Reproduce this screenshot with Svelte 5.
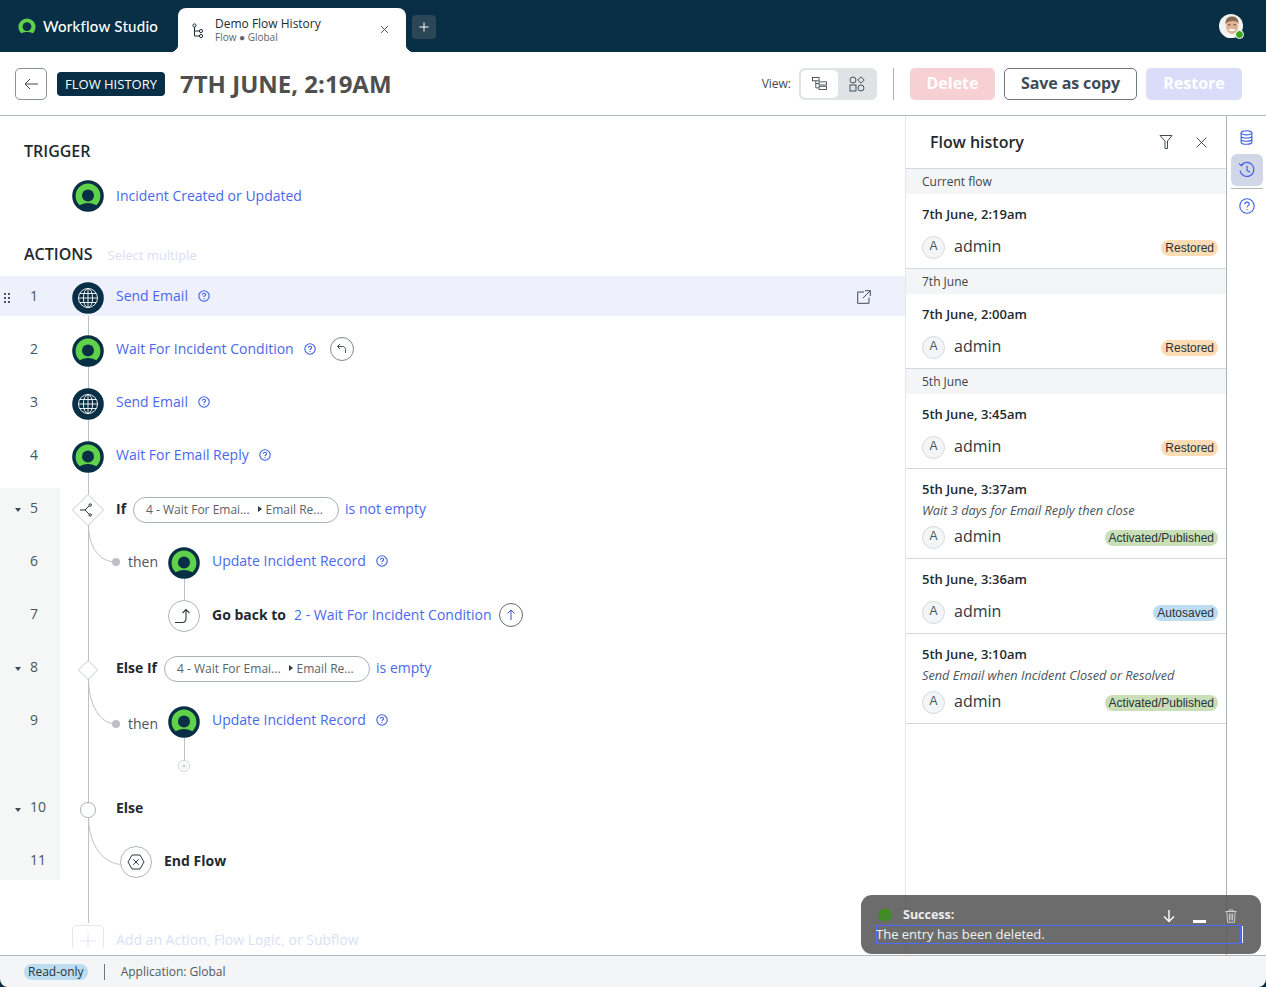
<script>
  const history = [
    { section: 'Current flow', date: '7th June, 2:19am', tag: 'Restored', kind: 'restored' },
    { section: '7th June', date: '7th June, 2:00am', tag: 'Restored', kind: 'restored' },
    { section: '5th June', date: '5th June, 3:45am', tag: 'Restored', kind: 'restored' },
    { date: '5th June, 3:37am', note: 'Wait 3 days for Email Reply then close', tag: 'Activated/Published', kind: 'active' },
    { date: '5th June, 3:36am', tag: 'Autosaved', kind: 'auto' },
    { date: '5th June, 3:10am', note: 'Send Email when Incident Closed or Resolved', tag: 'Activated/Published', kind: 'active' }
  ];
</script>

{#snippet logoNode()}
  <svg class="node" viewBox="-16 -16 32 32" aria-hidden="true">
    <circle r="15.8" fill="#082f45" />
    <path d="M-8.3 9.2A12.4 12.4 0 1 1 8.3 9.2Q0 5 -8.3 9.2Z" fill="#5fd24a" />
    <circle r="6" cy="-0.5" fill="#082f45" />
  </svg>
{/snippet}

{#snippet globeNode()}
  <svg class="node" viewBox="-16 -16 32 32" aria-hidden="true">
    <circle r="15.8" fill="#082f45" />
    <g fill="none" stroke="#fff" stroke-width="0.9">
      <circle r="9.5" />
      <ellipse rx="4.6" ry="9.5" />
      <path d="M0-9.5V9.5M-9.5 0H9.5M-8.4-4.5H8.4M-8.4 4.5H8.4" />
    </g>
  </svg>
{/snippet}

{#snippet help()}
  <svg class="help" viewBox="0 0 12 12" aria-hidden="true">
    <circle cx="6" cy="6" r="5.2" fill="none" stroke="#3f5fe8" stroke-width="1.1" />
    <path d="M4.4 4.8C4.4 3.8 5.1 3.3 6 3.3S7.6 3.9 7.6 4.7C7.6 5.7 6 5.8 6 7" fill="none" stroke="#3f5fe8" stroke-width="1.1" />
    <circle cx="6" cy="8.6" r=".7" fill="#3f5fe8" />
  </svg>
{/snippet}

{#snippet caret()}
  <span class="caret"></span>
{/snippet}

{#snippet pill()}
  <span class="pill">
    <span>4 - Wait For Emai...</span>
    <span class="tri"></span>
    <span>Email Re...</span>
  </span>
{/snippet}

<div class="app">
  <header class="topbar">
    <div class="brand">
      <svg class="brand-logo" viewBox="-9 -9 18 18" aria-hidden="true">
        <path d="M-6 6.2A8.6 8.6 0 1 1 6 6.2Q0 3.6 -6 6.2Z" fill="#5fd24a" />
        <circle r="4.4" cy="-0.4" fill="#082f45" />
      </svg>
      <span>Workflow Studio</span>
    </div>
    <div class="tab">
      <svg class="tab-icon" viewBox="0 0 14 16" aria-hidden="true">
        <g fill="none" stroke="#1d2b33" stroke-width="1">
          <circle cx="2.5" cy="2.5" r="1.6" />
          <circle cx="9" cy="8" r="1.6" />
          <circle cx="9" cy="13" r="1.6" />
          <path d="M2.5 4.1V13H7.4M2.5 8H7.4" />
        </g>
      </svg>
      <div class="tab-text">
        <div class="tab-title">Demo Flow History</div>
        <div class="tab-sub">Flow ● Global</div>
      </div>
      <svg class="tab-close" viewBox="0 0 10 10" aria-hidden="true">
        <path d="M1.2 1.2L8.8 8.8M8.8 1.2L1.2 8.8" stroke="#3a474f" stroke-width="1" />
      </svg>
    </div>
    <button class="plus" aria-label="New tab">
      <svg viewBox="0 0 10 10" width="10" height="10" aria-hidden="true">
        <path d="M5 .5V9.5M.5 5H9.5" stroke="#fff" stroke-width="1" />
      </svg>
    </button>
    <div class="me">
      <svg viewBox="0 0 24 24" width="24" height="24" aria-hidden="true">
        <defs><clipPath id="face"><circle cx="12" cy="12" r="12" /></clipPath></defs>
        <g clip-path="url(#face)">
          <rect width="24" height="24" fill="#f1f1ef" />
          <path d="M4 24C5 20 9 19 13 19S21 20 22 24Z" fill="#fafafa" />
          <ellipse cx="13" cy="12.5" rx="6" ry="7.5" fill="#e2b294" />
          <path d="M6.5 10.5C6 4 10 2.5 13.5 2.5S20 5 19.5 10.5C18.5 7.5 17 6.5 13 7S8 8 6.5 10.5Z" fill="#8a6a52" />
          <path d="M9.5 15.5C11 17.8 15 17.8 16.5 15.5L15 15H11Z" fill="#fff" />
          <path d="M9 10.8H11.5M14.5 10.8H17" stroke="#5b4636" stroke-width="1" />
        </g>
      </svg>
      <span class="me-badge"></span>
    </div>
  </header>

  <div class="toolbar">
    <button class="back" aria-label="Back">
      <svg viewBox="0 0 14 12" width="14" height="12" aria-hidden="true">
        <path d="M14 6H1M6 1L1 6L6 11" fill="none" stroke="#3a474f" stroke-width="1" />
      </svg>
    </button>
    <span class="flow-badge">FLOW HISTORY</span>
    <h1>7TH JUNE, 2:19AM</h1>
    <span class="view-label">View:</span>
    <div class="seg">
      <span class="seg-item on">
        <svg viewBox="0 0 16 14" width="15" height="13" aria-hidden="true">
          <g fill="none" stroke="#333f47" stroke-width=".9">
            <rect x=".5" y=".5" width="7" height="3.6" />
            <rect x="7.5" y="5.2" width="8" height="3.4" />
            <rect x="7.5" y="10" width="8" height="3.4" />
            <path d="M4 4V11.7H7.5M4 7H7.5" />
          </g>
        </svg>
      </span>
      <span class="seg-item">
        <svg viewBox="0 0 16 16" width="16" height="16" aria-hidden="true">
          <g fill="none" stroke="#333f47" stroke-width=".9">
            <circle cx="4" cy="4" r="3" />
            <path d="M12 .8L15.2 4L12 7.2L8.8 4Z" />
            <rect x="1" y="9" width="6" height="6" />
            <circle cx="12" cy="12" r="3" />
          </g>
        </svg>
      </span>
    </div>
    <span class="vr"></span>
    <button class="btn delete">Delete</button>
    <button class="btn copy">Save as copy</button>
    <button class="btn restore">Restore</button>
  </div>

  <div class="main">
    <section class="canvas">
      <svg class="wires" viewBox="0 116 905 839" width="905" height="839" aria-hidden="true">
        <g fill="none" stroke="#bcc3c8" stroke-width="1">
          <path d="M88.5 312V923" />
          <path d="M88.5 526C89 548 100 562 116 562" />
          <path d="M184.5 576V600" />
          <path d="M88.5 680C89 705 100 724 116 724" />
          <path d="M184.5 736V760" />
          <path d="M88.5 818C89 846 104 864 122 864.5" />
        </g>
        <circle cx="116" cy="562" r="4" fill="#bcc0c5" />
        <circle cx="116" cy="724" r="4" fill="#bcc0c5" />
      </svg>

      <h2 class="trigger-h">TRIGGER</h2>
      <div class="trigger">
        {@render logoNode()}
        <a class="link">Incident Created or Updated</a>
      </div>
      <div class="actions-h">
        <h2>ACTIONS</h2>
        <span>Select multiple</span>
      </div>

      <div class="row sel">
        <span class="grip"><i></i><i></i><i></i><i></i><i></i><i></i></span>
        <span class="num">1</span>
        {@render globeNode()}
        <a class="link">Send Email</a>
        {@render help()}
        <svg class="ext" viewBox="0 0 14 14" width="14" height="14" aria-hidden="true">
          <path d="M7 2H.7V13.3H12V7.5M8 .7H13.3V6M13.3 .7L6 8" fill="none" stroke="#3f4c54" stroke-width="1" />
        </svg>
      </div>
      <div class="row">
        <span class="num">2</span>
        {@render logoNode()}
        <a class="link">Wait For Incident Condition</a>
        {@render help()}
        <span class="round undo">
          <svg viewBox="0 0 12 12" width="12" height="12" aria-hidden="true">
            <path d="M1.5 3.5H6.5C8.5 3.5 9.5 5 9.5 6.5V10M1.5 3.5L4 1M1.5 3.5L4 6" fill="none" stroke="#3f4c54" />
          </svg>
        </span>
      </div>
      <div class="row">
        <span class="num">3</span>
        {@render globeNode()}
        <a class="link">Send Email</a>
        {@render help()}
      </div>
      <div class="row">
        <span class="num">4</span>
        {@render logoNode()}
        <a class="link">Wait For Email Reply</a>
        {@render help()}
      </div>

      <div class="group">
        <div class="row low">
          {@render caret()}
          <span class="num">5</span>
          <svg class="node n3" viewBox="-16 -16 32 32" aria-hidden="true">
            <path d="M0-15.5L15.5 0L0 15.5L-15.5 0Z" fill="#fff" stroke="#c3c9cd" />
            <g fill="none" stroke="#2a363e" stroke-width="1">
              <path d="M-8 0H-3L1-4M-3 0L1 4" />
              <circle cx="2.2" cy="-5" r="1.2" />
              <circle cx="2.2" cy="5" r="1.2" />
            </g>
          </svg>
          <strong class="kw">If</strong>
          {@render pill()}
          <a class="link">is not empty</a>
        </div>
        <div class="row">
          <span class="num">6</span>
          <span class="then-cell"><span class="then">then</span></span>
          {@render logoNode()}
          <a class="link">Update Incident Record</a>
          {@render help()}
        </div>
        <div class="row low">
          <span class="num">7</span>
          <span class="then-cell"></span>
          <span class="node n3 round-node">
            <svg viewBox="0 0 20 20" width="20" height="20" aria-hidden="true">
              <path d="M1 16.5H8C11 16.5 12 15 12 12.5V3.5M8.5 7L12 3.5L15.5 7" fill="none" stroke="#2f3b43" stroke-width="1.1" />
            </svg>
          </span>
          <strong class="go">Go back to</strong>
          <a class="link">2 - Wait For Incident Condition</a>
          <span class="round up">
            <svg viewBox="0 0 10 12" width="10" height="12" aria-hidden="true">
              <path d="M5 11V1M1.5 4.5L5 1L8.5 4.5" fill="none" stroke="#3550c8" />
            </svg>
          </span>
        </div>
        <div class="row low">
          {@render caret()}
          <span class="num">8</span>
          <svg class="node" viewBox="-16 -16 32 32" aria-hidden="true">
            <path d="M0-9.5L9.5 0L0 9.5L-9.5 0Z" fill="#fff" stroke="#c3c9cd" />
          </svg>
          <strong class="kw">Else If</strong>
          {@render pill()}
          <a class="link">is empty</a>
        </div>
        <div class="row">
          <span class="num">9</span>
          <span class="then-cell"><span class="then low">then</span></span>
          {@render logoNode()}
          <a class="link">Update Incident Record</a>
          {@render help()}
        </div>
        <div class="add-slot">
          <span class="add-dot">
            <svg viewBox="0 0 12 12" width="12" height="12" aria-hidden="true">
              <circle cx="6" cy="6" r="5.5" fill="#fff" stroke="#cfd4d8" />
              <path d="M6 3V9M3 6H9" stroke="#cfd4d8" />
            </svg>
          </span>
        </div>
        <div class="row">
          {@render caret()}
          <span class="num up-num">10</span>
          <svg class="node" viewBox="-16 -16 32 32" aria-hidden="true">
            <circle r="7.6" fill="#fff" stroke="#aeb6bc" />
          </svg>
          <strong class="kw">Else</strong>
        </div>
        <div class="row">
          <span class="num up-num">11</span>
          <span class="end-indent"></span>
          <span class="node n3 round-node">
            <svg viewBox="0 0 18 16" width="18" height="16" aria-hidden="true">
              <path d="M5 1H13L17 8L13 15H5L1 8Z" fill="none" stroke="#2f3b43" />
              <path d="M6.3 5.2L11.7 10.8M11.7 5.2L6.3 10.8" stroke="#2f3b43" />
            </svg>
          </span>
          <strong class="kw">End Flow</strong>
        </div>
      </div>

      <div class="add-row">
        <span class="add-box">
          <svg viewBox="0 0 14 14" width="14" height="14" aria-hidden="true">
            <path d="M7 0V14M0 7H14" stroke="#dfe3f6" />
          </svg>
        </span>
        <span class="add-text">Add an Action, Flow Logic, or Subflow</span>
      </div>
    </section>

    <aside class="panel">
      <div class="panel-head">
        <span class="panel-title">Flow history</span>
        <svg class="filter" viewBox="0 0 14 16" width="14" height="16" aria-hidden="true">
          <path d="M1 1.5H13L8.5 7V14.5H6V7Z" fill="none" stroke="#3f4c54" />
        </svg>
        <svg class="panel-x" viewBox="0 0 11 11" width="11" height="11" aria-hidden="true">
          <path d="M.7.7L10.3 10.3M10.3.7L.7 10.3" stroke="#3f4c54" />
        </svg>
      </div>
      {#each history as h}
        {#if h.section}<div class="section">{h.section}</div>{/if}
        <div class="entry">
          <div class="date">{h.date}</div>
          {#if h.note}<div class="note">{h.note}</div>{/if}
          <div class="user {h.note ? 'tight' : ''}">
            <span class="avatar">A</span>
            <span class="uname">admin</span>
            <span class="tag {h.kind}">{h.tag}</span>
          </div>
        </div>
      {/each}
    </aside>

    <nav class="rail">
      <span class="rail-btn first">
        <svg viewBox="0 0 14 16" width="13" height="15" aria-hidden="true">
          <g fill="none" stroke="#3f5fe8" stroke-width="1.2">
            <ellipse cx="7" cy="3" rx="5.8" ry="2.2" />
            <path d="M1.2 3V13C1.2 14.2 3.8 15.2 7 15.2S12.8 14.2 12.8 13V3M1.2 6.4C1.2 7.6 3.8 8.6 7 8.6S12.8 7.6 12.8 6.4M1.2 9.8C1.2 11 3.8 12 7 12S12.8 11 12.8 9.8" />
          </g>
        </svg>
      </span>
      <span class="rail-btn active">
        <svg viewBox="0 0 18 18" width="18" height="18" aria-hidden="true">
          <g fill="none" stroke="#3f5fe8" stroke-width="1.2">
            <path d="M3.5 4A7 7 0 1 1 2 9.5" />
            <path d="M1 2.6L3.5 4.6L5.8 2.4" />
            <path d="M9 4.8V9.4L12 11.2" />
          </g>
        </svg>
      </span>
      <span class="rail-sep"></span>
      <span class="rail-btn">
        <svg viewBox="0 0 16 16" width="16" height="16" aria-hidden="true">
          <circle cx="8" cy="8" r="7.2" fill="none" stroke="#3f5fe8" stroke-width="1.1" />
          <path d="M5.8 6.2C5.8 4.8 6.8 4.1 8 4.1S10.2 5 10.2 6.1C10.2 7.6 8 7.7 8 9.5" fill="none" stroke="#3f5fe8" stroke-width="1.1" />
          <circle cx="8" cy="11.6" r=".7" fill="#3f5fe8" />
        </svg>
      </span>
    </nav>
  </div>

  <footer class="status">
    <span class="readonly">Read-only</span>
    <span class="status-sep"></span>
    <span class="appname">Application: Global</span>
  </footer>

  <div class="toast">
    <div class="toast-top">
      <svg class="ok" viewBox="0 0 14 14" width="14" height="14" aria-hidden="true">
        <circle cx="7" cy="7" r="6.5" fill="#3e8e1e" />
        <path d="M4 7.2L6.2 9.3L10 5" fill="none" stroke="#5a7d4c" stroke-width="1.2" />
      </svg>
      <strong>Success:</strong>
      <svg class="t-down" viewBox="0 0 12 14" width="12" height="14" aria-hidden="true">
        <path d="M6 1V12.5M1 7.5L6 12.5L11 7.5" fill="none" stroke="#fff" stroke-width="1.4" />
      </svg>
      <span class="t-min"></span>
      <svg class="t-trash" viewBox="0 0 12 14" width="12" height="14" aria-hidden="true">
        <path d="M.5 2.5H11.5M4 2.5V1H8V2.5M1.8 2.5L2.6 13.3H9.4L10.2 2.5M4.4 4.5V11.5M6 4.5V11.5M7.6 4.5V11.5" fill="none" stroke="#d8d8d8" stroke-width=".9" />
      </svg>
    </div>
    <div class="toast-msg">The entry has been deleted.</div>
  </div>
</div>

<style>
  :global(body) {
    margin: 0;
    background: #082f45;
    font-family: "Open Sans", "Liberation Sans", sans-serif;
  }
  * { box-sizing: border-box; }
  h1, h2 { margin: 0; }
  button { font-family: inherit; cursor: pointer; }

  .app {
    position: relative;
    width: 1266px;
    height: 987px;
    display: flex;
    flex-direction: column;
    overflow: hidden;
    background: #082f45;
    color: #2e3a42;
  }

  /* top bar */
  .topbar {
    height: 52px;
    flex: none;
    display: flex;
    align-items: flex-end;
    background: #082f45;
    color: #fff;
  }
  .brand {
    width: 178px;
    height: 52px;
    display: flex;
    align-items: center;
    padding-left: 18px;
    gap: 7px;
    font-family: Lato, sans-serif;
    font-size: 15px;
    font-weight: 500;
    letter-spacing: .25px;
  }
  .brand-logo { width: 18px; height: 18px; flex: none; margin-top: 1px; }
  .tab {
    position: relative;
    width: 228px;
    height: 44px;
    display: flex;
    align-items: center;
    background: #fff;
    border-radius: 8px 8px 0 0;
    color: #1d2b33;
    padding: 0 17px 0 14px;
  }
  .tab::before, .tab::after {
    content: "";
    position: absolute;
    bottom: 0;
    width: 8px;
    height: 8px;
  }
  .tab::before { left: -8px; background: radial-gradient(circle at 0 0, transparent 8px, #fff 8.5px); }
  .tab::after { right: -8px; background: radial-gradient(circle at 100% 0, transparent 8px, #fff 8.5px); }
  .tab-icon { width: 14px; height: 16px; margin-top: 1px; flex: none; }
  .tab-text { margin: -2px 0 0 9px; flex: 1; }
  .tab-title { font-size: 12px; line-height: 16px; }
  .tab-sub { font-size: 10px; line-height: 12px; color: #5b666d; margin-top: -1px; }
  .tab-close { width: 9px; height: 9px; margin-top: -1px; flex: none; }
  .plus {
    width: 24px;
    height: 24px;
    margin: 0 0 13px 6px;
    padding: 0;
    border: 0;
    border-radius: 4px;
    background: #2a4657;
    display: flex;
    align-items: center;
    justify-content: center;
  }
  .me { position: relative; margin: 0 23px 14px auto; width: 24px; height: 24px; }
  .me svg { display: block; }
  .me-badge {
    position: absolute;
    right: -1px;
    bottom: -1px;
    width: 9px;
    height: 9px;
    border-radius: 50%;
    background: #3fa51e;
    border: 1px solid #fff;
  }

  /* toolbar */
  .toolbar {
    height: 64px;
    flex: none;
    background: #fff;
    border-bottom: 1px solid #b0b6ba;
    display: flex;
    align-items: center;
    padding: 0 24px 0 15px;
  }
  .back {
    width: 32px;
    height: 32px;
    padding: 0;
    border: 1px solid #87939a;
    border-radius: 5px;
    background: #fff;
    display: flex;
    align-items: center;
    justify-content: center;
  }
  .flow-badge {
    margin-left: 10px;
    width: 108px;
    height: 24px;
    background: #082f45;
    color: #fff;
    border-radius: 4px;
    font-size: 13px;
    line-height: 24px;
    text-align: center;
    white-space: nowrap;
  }
  h1 {
    margin-left: 15px;
    font-size: 24px;
    line-height: 32px;
    font-weight: 700;
    color: #4f4f4f;
    white-space: nowrap;
  }
  .view-label { margin-left: auto; font-size: 12px; color: #3f4c54; }
  .seg {
    margin-left: 8px;
    width: 78px;
    height: 32px;
    padding: 2px;
    background: #dfe3e6;
    border-radius: 6px;
    display: flex;
  }
  .seg-item {
    width: 38px;
    display: flex;
    align-items: center;
    justify-content: center;
    border-radius: 5px;
  }
  .seg-item.on { background: #fff; }
  .vr { width: 1px; height: 32px; background: #aab2b7; margin: 0 16px; }
  .btn {
    height: 32px;
    border-radius: 5px;
    border: 0;
    font-size: 16px;
    font-weight: 700;
    color: #fff;
    padding: 0 0 2px;
    white-space: nowrap;
  }
  .delete { width: 85px; background: #f7d0d3; }
  .copy {
    width: 133px;
    margin-left: 9px;
    background: #fff;
    border: 1px solid #6b787f;
    color: #3f4c54;
    font-weight: 700;
    letter-spacing: -.1px;
  }
  .restore { width: 96px; margin-left: 9px; background: #d9ddf9; }

  /* main */
  .main { flex: 1; min-height: 0; display: flex; background: #fff; }
  .canvas { position: relative; width: 905px; flex: none; overflow: hidden; }
  .wires { position: absolute; left: 0; top: 0; display: block; }
  .trigger-h, .actions-h h2 {
    font-size: 16px;
    line-height: 22px;
    font-weight: 600;
    color: #1f2a30;
  }
  .trigger-h { position: relative; margin: 24px 0 0 24px; }
  .trigger {
    position: relative;
    display: flex;
    align-items: center;
    margin: 18px 0 0 72px;
    height: 32px;
  }
  .actions-h {
    position: relative;
    display: flex;
    align-items: center;
    margin: 31px 0 11px 24px;
    gap: 15px;
  }
  .actions-h span { font-size: 13px; color: #d9def8; margin-top: 2px; }
  .node { width: 32px; height: 32px; flex: none; display: block; margin-top: 5px; }
  .node.n3 { margin-top: 3px; }
  .trigger .node { margin-top: 0; }
  .sel .node { margin-top: 4px; }
  .link { color: #4a68ee; font-size: 14px; line-height: 20px; margin-left: 12px; white-space: nowrap; }
  .row {
    position: relative;
    height: 53px;
    display: flex;
    align-items: center;
    padding-left: 72px;
  }
  .row.low { padding-top: 2px; }
  .row.sel {
    height: 40px;
    margin-bottom: 6px;
    background: #eef0fb;
  }
  .num {
    position: absolute;
    left: 30px;
    top: 50%;
    transform: translateY(-50%);
    font-size: 14px;
    line-height: 20px;
    color: #4a555c;
  }
  .num.up-num { margin-top: -1px; }
  .caret {
    position: absolute;
    left: 15px;
    top: 50%;
    border: 3.5px solid transparent;
    border-top: 4px solid #3f4c54;
    border-bottom: 0;
  }
  .grip {
    position: absolute;
    left: 4px;
    top: 17px;
    display: grid;
    grid-template-columns: 2px 2px;
    gap: 2px;
  }
  .grip i { width: 2px; height: 2px; background: #4a555c; }
  .help { width: 12px; height: 12px; margin-left: 10px; flex: none; }
  .ext { margin-left: auto; margin-right: 34px; margin-top: 2px; }
  .round {
    width: 24px;
    height: 24px;
    flex: none;
    border-radius: 50%;
    border: 1px solid #7b868d;
    background: #fff;
    display: flex;
    align-items: center;
    justify-content: center;
  }
  .undo { margin-left: 14px; }
  .up { margin-left: 7px; border-color: #5f6b73; }
  .group { position: relative; }
  .group::before {
    content: "";
    position: absolute;
    left: 0;
    top: 7px;
    bottom: 7px;
    width: 60px;
    background: #f5f7f7;
  }
  .kw { font-size: 14px; font-weight: 700; color: #1f2a30; margin-left: 12px; white-space: nowrap; }
  .pill {
    margin-left: 7px;
    margin-top: 3px;
    width: 206px;
    height: 26px;
    flex: none;
    border: 1px solid #a9b1b7;
    border-radius: 13px;
    background: #fff;
    display: flex;
    align-items: center;
    gap: 6px;
    padding: 0 0 2px 12px;
    font-size: 12px;
    color: #59646b;
    white-space: nowrap;
  }
  .tri {
    border: 3.5px solid transparent;
    border-left: 4px solid #2f3b43;
    border-right: 0;
    margin: 0 -2px 0 2px;
  }
  .pill + .link { margin-left: 6px; }
  .then-cell { width: 96px; flex: none; position: relative; height: 100%; display: flex; align-items: center; padding-left: 56px; }
  .then { font-size: 14px; color: #4a555c; margin-top: 1px; }
  .then.low { margin-top: 7px; }
  .round-node {
    border-radius: 50%;
    border: 1px solid #aeb6bc;
    background: #fff;
    display: flex;
    align-items: center;
    justify-content: center;
  }
  .go { font-size: 14px; font-weight: 700; color: #1f2a30; margin-left: 12px; white-space: nowrap; }
  .go + .link { margin-left: 8px; }
  .add-slot { height: 35px; padding-left: 178px; display: flex; position: relative; align-items: flex-start; padding-top: 14px; }
  .add-dot { display: block; height: 12px; }
  .add-dot svg { display: block; }
  .end-indent { width: 48px; flex: none; }
  .add-row {
    position: relative;
    margin: 38px 0 0 72px;
    height: 22px;
    overflow: hidden;
    display: flex;
    align-items: flex-start;
  }
  .add-box {
    width: 32px;
    height: 32px;
    flex: none;
    border: 1px solid #e3e6f5;
    border-radius: 4px;
    background: #fff;
    display: flex;
    align-items: center;
    justify-content: center;
  }
  .add-text { margin: 5px 0 0 12px; font-size: 14px; line-height: 20px; color: #dadff8; white-space: nowrap; }

  /* panel */
  .panel {
    width: 322px;
    flex: none;
    border-left: 1px solid #e4e7e9;
    border-right: 1px solid #aab3ba;
    background: #fff;
    display: flex;
    flex-direction: column;
  }
  .panel-head {
    height: 53px;
    flex: none;
    display: flex;
    align-items: center;
    padding: 0 19px 0 24px;
    border-bottom: 1px solid #d5d9dd;
  }
  .panel-title { font-size: 16px; font-weight: 600; color: #1f2a30; flex: 1; }
  .filter { margin-right: 23px; }
  .section {
    height: 25px;
    flex: none;
    padding-left: 16px;
    background: #f4f5f7;
    font-size: 12px;
    line-height: 25px;
    color: #3a464e;
  }
  .entry {
    flex: none;
    padding: 10px 8px 10px 16px;
    border-bottom: 1px solid #d5d9dd;
    box-sizing: content-box;
    width: calc(100% - 24px);
  }
  .date { font-size: 13px; line-height: 20px; font-weight: 600; color: #1f2a30; }
  .note { font-size: 12.75px; line-height: 18px; margin-top: 2px; font-style: italic; color: #4a555c; white-space: nowrap; }
  .user { display: flex; align-items: center; height: 24px; margin-top: 10px; }
  .user.tight { margin-top: 5px; }
  .avatar {
    width: 23px;
    height: 23px;
    margin-top: 3px;
    border-radius: 50%;
    background: #f3f5f7;
    border: 1px solid #d5d9dd;
    font-family: "Liberation Sans", sans-serif;
    font-size: 12px;
    line-height: 18px;
    text-align: center;
    color: #4a555c;
  }
  .uname { margin-left: 9px; font-size: 16px; color: #2e3a42; }
  .tag {
    margin-left: auto;
    height: 16px;
    margin-top: 3px;
    padding: 0 4px;
    border-radius: 8px;
    font-family: "Liberation Sans", sans-serif;
    font-size: 12px;
    line-height: 16px;
    color: #2a3338;
    white-space: nowrap;
  }
  .restored { background: #fbdcb4; }
  .active { background: #c9dfb8; }
  .auto { background: #bcdcf2; }

  /* rail */
  .rail {
    width: 39px;
    flex: none;
    background: #fff;
    display: flex;
    flex-direction: column;
    align-items: center;
    padding-top: 5px;
  }
  .rail-btn { width: 32px; height: 32px; display: flex; align-items: center; justify-content: center; flex: none; }
  .rail-btn.first { margin-bottom: 1px; }
  .rail-btn.active { background: #d2d7e8; border-radius: 6px; }
  .rail-sep { width: 32px; height: 1px; background: #b0b6ba; margin: 2px 0 1px; flex: none; }

  /* status */
  .status {
    height: 32px;
    flex: none;
    display: flex;
    align-items: center;
    padding-left: 24px;
    background: #f3f5f6;
    border-top: 1px solid #b0b6ba;
    border-radius: 0 0 8px 8px;
    font-size: 12px;
  }
  .readonly {
    height: 16px;
    padding: 0 4px;
    border-radius: 8px;
    background: #bcdcf2;
    line-height: 16px;
    color: #2a3338;
    margin-top: 1px;
  }
  .status-sep { width: 1px; height: 16px; background: #6b787f; margin: 0 16px 0 16px; }
  .appname { color: #4f5a61; }

  /* toast */
  .toast {
    position: absolute;
    left: 861px;
    top: 895px;
    width: 400px;
    height: 59px;
    border-radius: 11px;
    background: rgba(88, 88, 88, .88);
    color: #fff;
    padding: 10px 0 0 15px;
  }
  .toast-top { display: flex; align-items: center; height: 18px; padding-left: 2px; }
  .toast-top strong { margin-left: 11px; font-size: 12.5px; font-weight: 700; color: #eee; flex: 1; }
  .ok { margin-top: 2px; }
  .t-down { margin-right: 18px; margin-top: 4px; }
  .t-min { width: 13px; height: 3px; background: #fff; margin-right: 19px; margin-top: 14px; }
  .t-trash { margin-right: 24px; margin-top: 3px; }
  .toast-msg {
    margin-top: 2px;
    width: 365px;
    height: 19px;
    border: 1px solid #4d6cff;
    font-size: 13px;
    line-height: 17px;
    color: #f2f2f2;
    text-indent: -1px;
    box-shadow: 2px 0 0 -1px #666, 3px 0 0 -1px #fff;
  }
</style>
